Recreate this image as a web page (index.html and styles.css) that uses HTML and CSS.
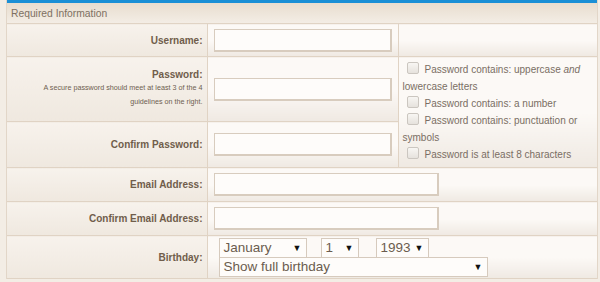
FILE: index.html
```html
<!DOCTYPE html>
<html>
<head>
<meta charset="utf-8">
<link rel="stylesheet" href="styles.css">
</head>
<body>
<div class="page">
  <div class="panel">
    <div class="topbar"></div>
    <table class="form">
      <colgroup>
        <col class="c1">
        <col class="c2">
        <col class="c3">
      </colgroup>
      <tr class="r-head">
        <th colspan="3" class="head">Required Information</th>
      </tr>
      <tr class="r-user">
        <td class="label">Username:</td>
        <td class="field"><span class="input w-short"></span></td>
        <td class="rest"></td>
      </tr>
      <tr class="r-pass">
        <td class="label">Password:<div class="note">A secure password should meet at least 3 of the 4<br>guidelines on the right.</div></td>
        <td class="field"><span class="input w-short"></span></td>
        <td class="rules" rowspan="2">
          <div class="rule"><span class="cb"></span>Password contains: uppercase <i>and</i> lowercase letters</div>
          <div class="rule"><span class="cb"></span>Password contains: a number</div>
          <div class="rule"><span class="cb"></span>Password contains: punctuation or symbols</div>
          <div class="rule"><span class="cb"></span>Password is at least 8 characters</div>
        </td>
      </tr>
      <tr class="r-confirm">
        <td class="label">Confirm Password:</td>
        <td class="field"><span class="input w-short"></span></td>
      </tr>
      <tr class="r-mail">
        <td class="label">Email Address:</td>
        <td class="field" colspan="2"><span class="input w-long"></span></td>
      </tr>
      <tr class="r-mail">
        <td class="label">Confirm Email Address:</td>
        <td class="field" colspan="2"><span class="input w-long"></span></td>
      </tr>
      <tr class="r-birth">
        <td class="label">Birthday:</td>
        <td class="field" colspan="2">
          <div class="selrow">
            <span class="sel s-month">January<b class="arr">▼</b></span>
            <span class="sel s-day">1<b class="arr">▼</b></span>
            <span class="sel s-year">1993<b class="arr">▼</b></span>
          </div>
          <span class="sel s-show">Show full birthday<b class="arr">▼</b></span>
        </td>
      </tr>
    </table>
  </div>
</div>
</body>
</html>
```
FILE: styles.css
```css
html, body {
  margin: 0;
  padding: 0;
  background: #f3ede5;
  font-family: "Liberation Sans", Arial, sans-serif;
}
.page {
  width: 600px;
  height: 282px;
  overflow: hidden;
  box-sizing: border-box;
  padding-left: 6px;
}
.panel {
  width: 592px;
  box-sizing: border-box;
  border-left: 1px solid #e2d6c8;
  border-right: 1px solid #e2d6c8;
  background: #f6f1eb;
}
.topbar {
  height: 3px;
  background: #1a8fd6;
}
.form {
  width: 590px;
  border-collapse: collapse;
  table-layout: fixed;
}
.c1 { width: 200px; }
.c2 { width: 191px; }
.c3 { width: 199px; }
.form td, .form th {
  border: 1px solid #e0d3c4;
  padding: 0;
}
.form tr > *:first-child { border-left: 0; }
.form tr > *:last-child { border-right: 0; }
.head {
  height: 20px;
  text-align: left;
  font-weight: normal;
  font-size: 10.3px;
  color: #7d7062;
  padding-left: 4px !important;
  background: linear-gradient(#e8ddcf, #f3ede5);
  border-top: 0 !important;
}
.label {
  text-align: right;
  padding-right: 4px !important;
  font-size: 10px;
  font-weight: bold;
  color: #705d4b;
  background: linear-gradient(#f7f2ec, #efe8df);
}
.field {
  padding-left: 6px !important;
  background: linear-gradient(#fcf9f6 50%, #efe9e2);
}
.rest, .rules {
  background: linear-gradient(#fcf9f6 50%, #efe9e2);
}
.r-user { height: 33px; }
.r-pass { height: 65px; }
.r-confirm { height: 46px; }
.r-mail { height: 34px; }
.r-birth { height: 43px; }
.input {
  display: block;
  height: 23px;
  box-sizing: border-box;
  border: 1px solid #d8ccbe;
  border-bottom-width: 2px;
  border-right-width: 2px;
  background: #fefcfa;
}
.w-short { width: 178px; }
.w-long { width: 225px; }
.note {
  font-size: 7.2px;
  font-weight: normal;
  color: #6e5e50;
  line-height: 14px;
  margin-top: 1px;
  white-space: nowrap;
}
.rules {
  vertical-align: top;
  padding: 4px 4px 0 4px !important;
  font-size: 10px;
  color: #7a6e63;
  line-height: 17px;
}
.cb {
  display: inline-block;
  width: 12px;
  height: 12px;
  box-sizing: border-box;
  border: 1px solid #cbc6c0;
  border-radius: 2px;
  background: linear-gradient(#f8f6f3, #e6e2dd);
  margin: 0 6px 0 4px;
  vertical-align: -1px;
}
.selrow {
  display: flex;
  padding-left: 5px;
}
.sel {
  display: inline-flex;
  align-items: center;
  justify-content: space-between;
  box-sizing: border-box;
  height: 20px;
  border: 1px solid #d6cabd;
  background: #fefcfa;
  font-size: 13.5px;
  color: #6b5c4e;
  padding: 0 4px;
}
.arr {
  font-size: 9px;
  color: #111;
  font-weight: normal;
}
.s-month { width: 88px; }
.s-day { width: 38px; margin-left: 14px; }
.s-year { width: 53px; margin-left: 17px; }
.s-show { width: 269px; margin-left: 5px; display: flex; margin-top: -1px; }
```
